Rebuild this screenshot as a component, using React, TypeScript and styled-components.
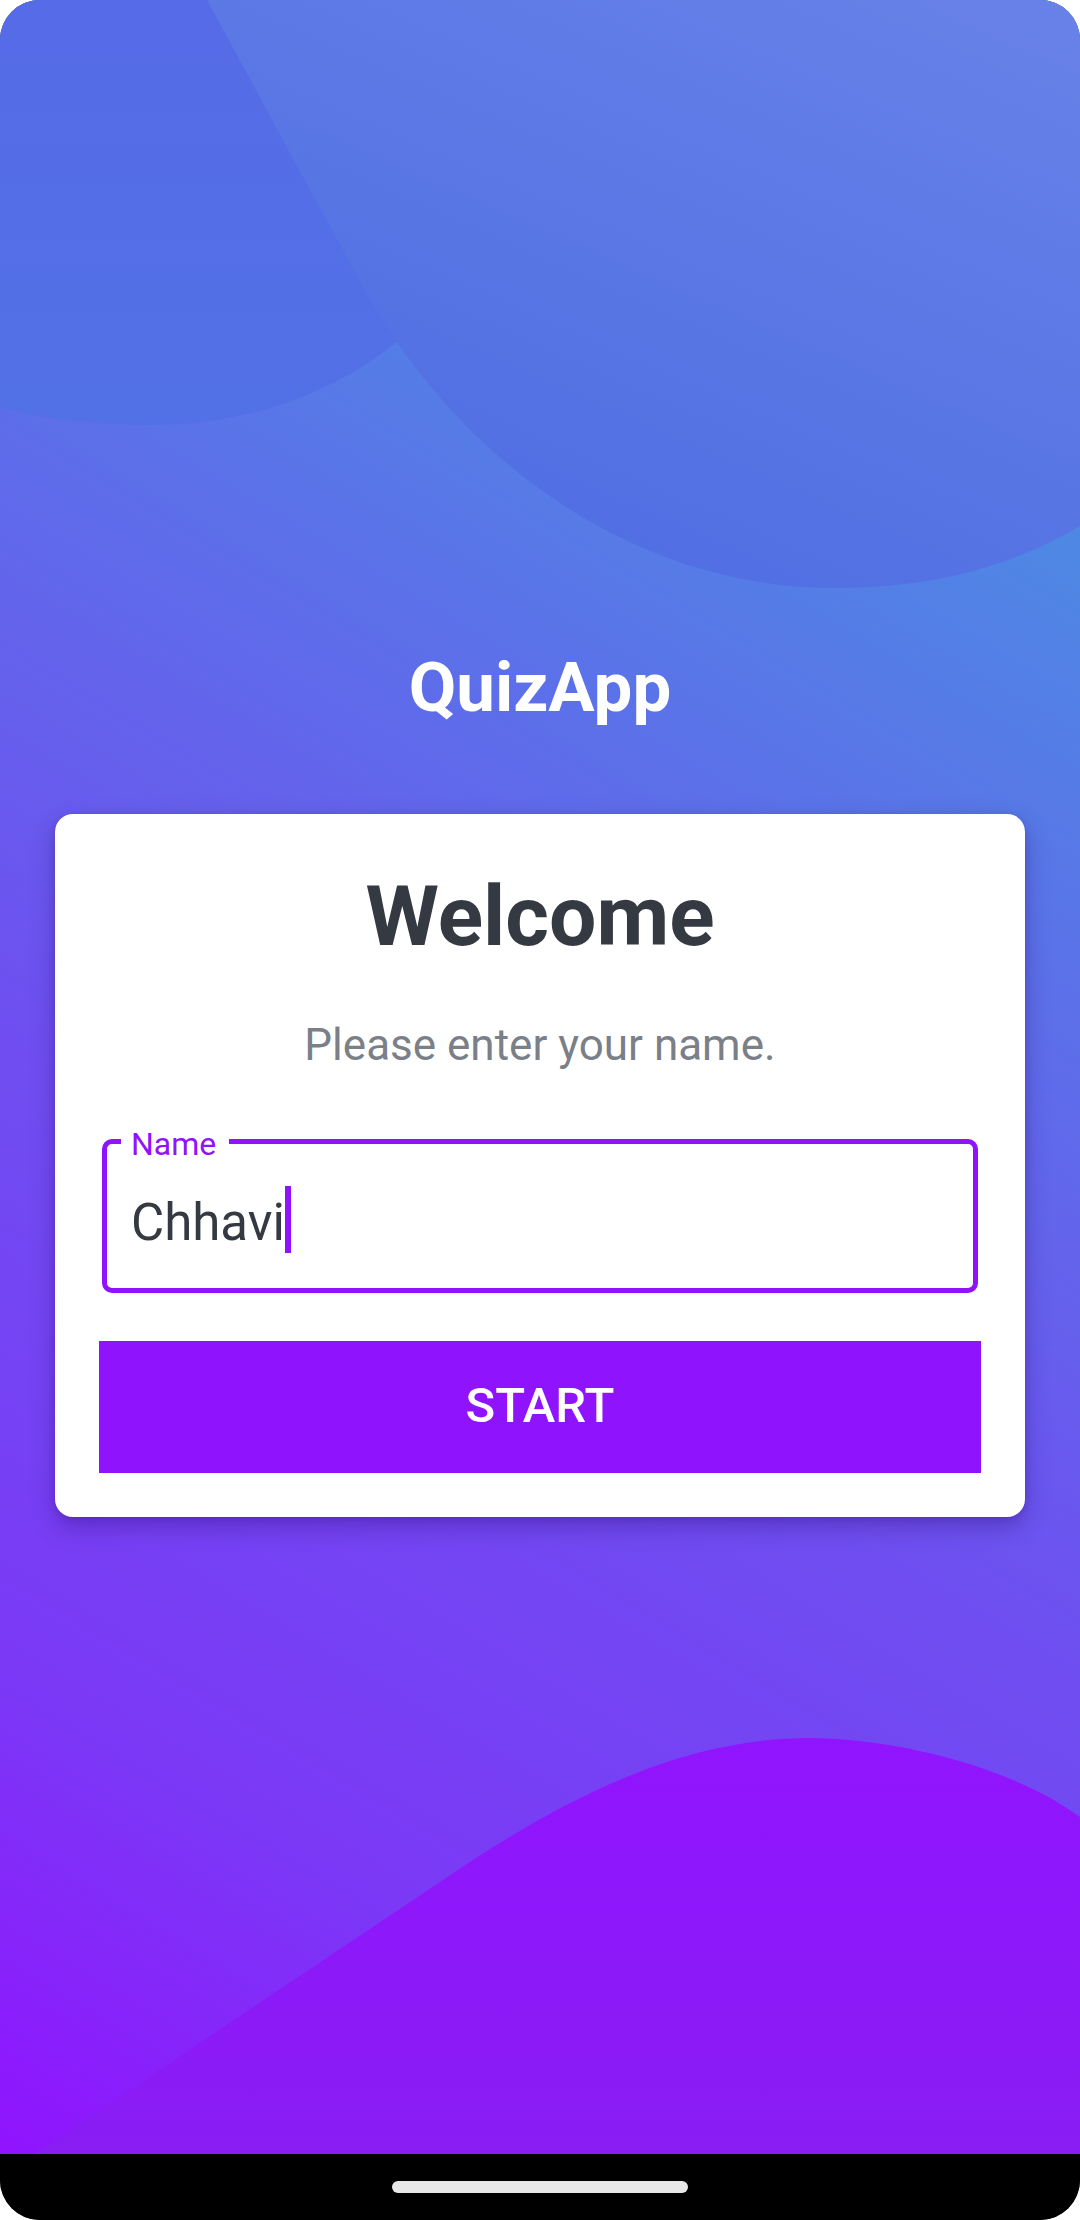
import React from "react";
import styled, { createGlobalStyle } from "styled-components";

const GlobalStyle = createGlobalStyle`
  html, body {
    margin: 0;
    padding: 0;
    background: #ffffff;
  }
  body {
    font-family: Roboto, "Noto Sans", "Liberation Sans", sans-serif;
  }
  * { box-sizing: border-box; }
`;

const Screen = styled.div`
  width: 1080px;
  height: 2220px;
  border-radius: 40px;
  overflow: hidden;
  display: flex;
  flex-direction: column;
  background: #000;
`;

const Main = styled.main`
  position: relative;
  flex: 1;
  display: flex;
  flex-direction: column;
  align-items: center;
  justify-content: center;
  padding-top: 10px;
  background: linear-gradient(
    31deg,
    #9013fe 0%,
    #7b38f6 17%,
    #6f4ef1 40%,
    #6462ec 54%,
    #5779e7 70%,
    #4f87e4 80%,
    #4a90e2 100%
  );
`;

const Backdrop = styled.svg`
  position: absolute;
  inset: 0;
  width: 100%;
  height: 100%;
  z-index: 0;
`;

const Title = styled.h1`
  position: relative;
  z-index: 1;
  margin: 0;
  font-family: Roboto, "Liberation Sans", sans-serif;
  font-weight: 700;
  font-size: 69px;
  line-height: 1.2;
  color: #ffffff;
`;

const Card = styled.section`
  position: relative;
  z-index: 1;
  margin-top: 84px;
  width: 970px;
  padding: 53px 44px 44px;
  display: flex;
  flex-direction: column;
  background: #ffffff;
  border-radius: 18px;
  box-shadow: 0 10px 24px rgba(40, 0, 100, 0.3), 0 2px 6px rgba(40, 0, 100, 0.15);
`;

const Heading = styled.h2`
  margin: 0;
  text-align: center;
  font-weight: 700;
  font-size: 84px;
  line-height: 1.2;
  color: #353a42;
`;

const Subtitle = styled.p`
  margin: 51px 0 0;
  text-align: center;
  font-weight: 400;
  font-size: 44px;
  line-height: 1.2;
  color: #7a7f88;
`;

const Field = styled.div`
  position: relative;
  margin: 67px 3px 0;
  height: 154px;
  border: 5px solid #9013fe;
  border-radius: 10px;
  padding: 42px 24px 0;
  display: flex;
  align-items: flex-start;
`;

const FieldLabel = styled.span`
  position: absolute;
  left: 14px;
  top: -16px;
  padding: 0 13px 0 10px;
  background: #ffffff;
  font-size: 32px;
  line-height: 1;
  color: #9013fe;
`;

const FieldValue = styled.span`
  margin-top: 6px;
  font-size: 51px;
  line-height: 1.2;
  color: #353a42;
`;

const Caret = styled.span`
  display: block;
  width: 6px;
  height: 67px;
  background: #9013fe;
`;

const StartButton = styled.button`
  margin-top: 48px;
  height: 132px;
  border: none;
  border-radius: 0;
  background: #9013fe;
  color: #ffffff;
  font-family: Roboto, "Liberation Sans", sans-serif;
  font-weight: 500;
  font-size: 49px;
  line-height: 1.2;
  cursor: pointer;
`;

const NavBar = styled.nav`
  height: 66px;
  flex-shrink: 0;
  display: flex;
  align-items: center;
  justify-content: center;
  background: #000000;
`;

const HomeHandle = styled.div`
  width: 296px;
  height: 12px;
  border-radius: 6px;
  background: #e8e8e8;
`;

function Blobs() {
  return (
    <Backdrop viewBox="0 0 1080 2154" preserveAspectRatio="none" aria-hidden="true">
      <defs>
        <linearGradient id="smallBlob" x1="0" y1="0" x2="0" y2="1">
          <stop offset="0" stopColor="#566be7" />
          <stop offset="1" stopColor="#5271e6" />
        </linearGradient>
        <linearGradient id="bigBlob" x1="1" y1="0" x2="0.35" y2="1">
          <stop offset="0" stopColor="#6882e8" />
          <stop offset="1" stopColor="#4e6de2" />
        </linearGradient>
        <linearGradient id="hill" x1="0" y1="0" x2="0" y2="1">
          <stop offset="0" stopColor="#9114fe" />
          <stop offset="1" stopColor="#891df4" />
        </linearGradient>
      </defs>
      <path
        d="M0,0 H440 V300 C380,370 280,425 150,425 C90,425 40,418 0,408 Z"
        fill="url(#smallBlob)"
      />
      <path
        d="M207,0 L370,300 C458,452 625,588 835,588 C935,588 1012,566 1080,526 L1080,0 Z"
        fill="url(#bigBlob)"
      />
      <path
        d="M34,2154 L440,1882 C560,1800 680,1738 809,1738 C890,1738 1010,1765 1080,1817 L1080,2154 Z"
        fill="url(#hill)"
      />
    </Backdrop>
  );
}

export default function App() {
  return (
    <>
      <GlobalStyle />
      <Screen>
        <Main>
          <Blobs />
          <Title>QuizApp</Title>
          <Card>
            <Heading>Welcome</Heading>
            <Subtitle>Please enter your name.</Subtitle>
            <Field>
              <FieldLabel>Name</FieldLabel>
              <FieldValue>Chhavi</FieldValue>
              <Caret />
            </Field>
            <StartButton type="button">START</StartButton>
          </Card>
        </Main>
        <NavBar>
          <HomeHandle />
        </NavBar>
      </Screen>
    </>
  );
}
